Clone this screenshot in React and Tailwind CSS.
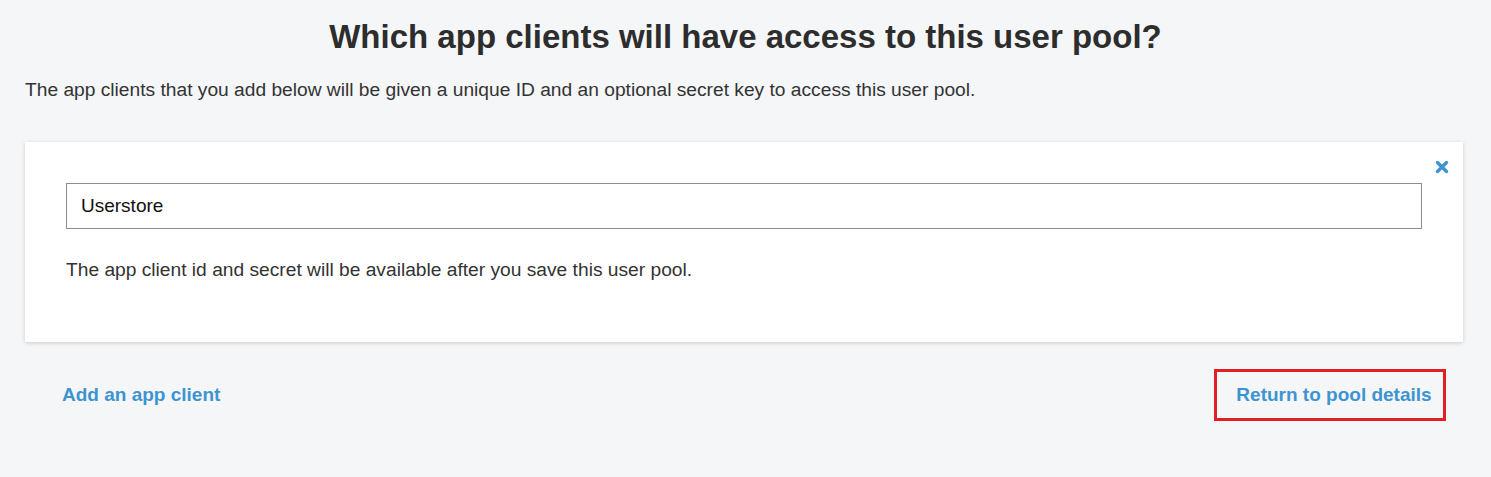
import React from "react";

export default function App() {
  return (
    <div className="w-[1491px] h-[477px] bg-[#f5f6f8] font-['Liberation_Sans',Arial,sans-serif] text-[#333333] overflow-hidden">
      <div className="px-[25px] pt-[17px]">
        <h1 className="text-center text-[33px] leading-[40px] font-bold text-[#2d2d2d]">
          Which app clients will have access to this user pool?
        </h1>
        <p className="mt-[22px] text-[19.2px] leading-[22px] text-[#333333]">
          The app clients that you add below will be given a unique ID and an optional secret key to access this user pool.
        </p>
        <div className="mt-[41px] w-[1438px] h-[200px] bg-white shadow-[0_1px_4px_rgba(0,0,0,0.18)] relative px-[41px] pt-[41px]">
          <div className="absolute right-[14px] top-[18px] text-[#3d94d1]">
            <svg width="14" height="14" viewBox="0 0 14 14">
              <path d="M2.5 2.5 L11.5 11.5 M11.5 2.5 L2.5 11.5" stroke="currentColor" strokeWidth="3.4" strokeLinecap="round" />
            </svg>
          </div>
          <div className="w-[1356px] h-[46px] border border-[#8d8d8d] bg-white flex items-center px-[14px] text-[19px] text-[#111111]">
            Userstore
          </div>
          <p className="mt-[30px] text-[19.2px] leading-[22px] text-[#333333]">
            The app client id and secret will be available after you save this user pool.
          </p>
        </div>
        <div className="flex items-center justify-between mt-[27px]">
          <a className="ml-[37px] text-[19px] font-bold text-[#3d94d1]">Add an app client</a>
          <div className="mr-[20px] w-[232px] h-[52px] border-[3px] border-[#e31e25] flex items-center justify-center pl-[8px]">
            <a className="text-[19px] font-bold text-[#3d94d1]">Return to pool details</a>
          </div>
        </div>
      </div>
    </div>
  );
}
